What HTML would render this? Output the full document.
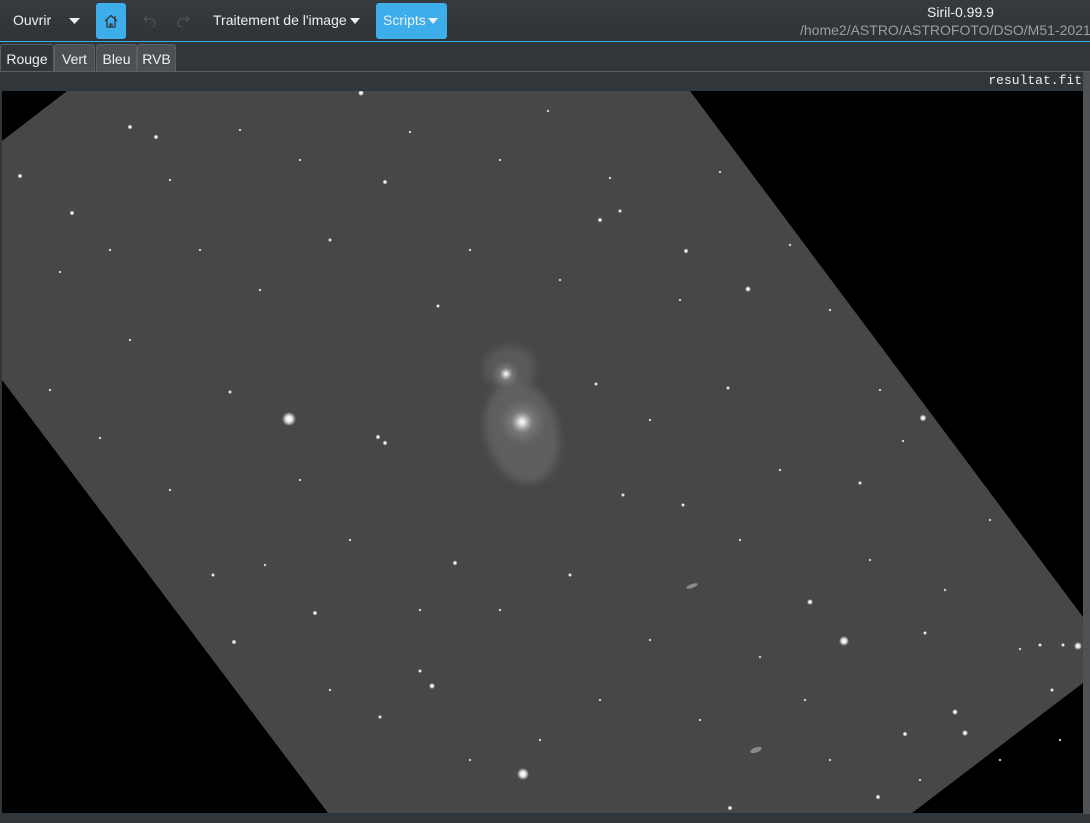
<!DOCTYPE html>
<html><head><meta charset="utf-8"><style>
*{margin:0;padding:0;box-sizing:border-box}
body{width:1090px;height:823px;background:#31363b;font-family:"Liberation Sans",sans-serif;color:#eff0f1;overflow:hidden;position:relative}
.tb{position:absolute;left:0;top:0;width:1090px;height:42px;background:linear-gradient(#363b40,#2f3338);border-bottom:1px solid #3daee9}
.t{position:absolute;font-size:14px;top:12px;color:#eff0f1}
.btn{position:absolute;top:3px;height:36px;background:#3daee9;border-radius:3px}
.tab{position:absolute;top:44px;height:28px;font-size:14px;padding-top:6px;text-align:center;border:1px solid #5a5f64;border-bottom:none;border-radius:3px 3px 0 0;background:#4b5055;color:#eff0f1}
</style></head><body>
<div class="tb">
<div class="t" style="left:13px">Ouvrir</div>
<svg style="position:absolute;left:69px;top:18px" width="11" height="6"><path d="M0 0h11L5.5 6z" fill="#eff0f1"/></svg>
<div class="btn" style="left:96px;width:30px"><svg style="position:absolute;left:7px;top:10px" width="16" height="16" viewBox="0 0 16 16"><path d="M2 8L8 2.5 14 8M4 6.5V14h8V6.5M7 14v-3h2v3M12 3v3" stroke="#31363b" stroke-width="1.3" fill="none"/></svg></div>
<svg style="position:absolute;left:143px;top:13px" width="14" height="14" viewBox="0 0 14 14"><path d="M4 3L1 6l3 3M1 6h7a4 4 0 010 8" stroke="#4d5257" stroke-width="1.3" fill="none"/></svg>
<svg style="position:absolute;left:176px;top:13px" width="14" height="14" viewBox="0 0 14 14"><path d="M10 3l3 3-3 3M13 6H6a4 4 0 000 8" stroke="#4d5257" stroke-width="1.3" fill="none"/></svg>
<div class="t" style="left:213px">Traitement de l'image</div>
<svg style="position:absolute;left:350px;top:18px" width="10" height="6"><path d="M0 0h10L5 6z" fill="#eff0f1"/></svg>
<div class="btn" style="left:376px;width:71px"><span style="position:absolute;left:7px;top:9px;font-size:14px">Scripts</span><svg style="position:absolute;left:52px;top:15px" width="10" height="6"><path d="M0 0h10L5 6z" fill="#eff0f1"/></svg></div>
<div style="position:absolute;left:927px;top:4px;font-size:14px">Siril-0.99.9</div>
<div style="position:absolute;left:800px;top:22px;font-size:14px;color:#9a9ea2;white-space:nowrap">/home2/ASTRO/ASTROFOTO/DSO/M51-2021_0</div>
</div>
<div class="tab" style="left:0;width:54px;background:#31363b;color:#eff0f1">Rouge</div>
<div class="tab" style="left:54px;width:41px">Vert</div>
<div class="tab" style="left:96px;width:41px">Bleu</div>
<div class="tab" style="left:137px;width:39px">RVB</div>
<div style="position:absolute;left:0;top:71px;width:1090px;height:1px;background:#5a5f64"></div>
<div style="position:absolute;right:8px;top:73px;font-family:'Liberation Mono',monospace;font-size:13px;color:#eff0f1">resultat.fit</div>
<div style="position:absolute;left:1083px;top:72px;width:7px;height:742px;background:#4d5257"></div>
<svg style="position:absolute;left:0;top:91px" width="1083" height="722" viewBox="0 91 1083 722">
<defs>
<radialGradient id="s"><stop offset="0" stop-color="#fff"/><stop offset=".4" stop-color="#eee"/><stop offset="1" stop-color="#fff" stop-opacity="0"/></radialGradient>
<radialGradient id="g"><stop offset="0" stop-color="#fff"/><stop offset=".12" stop-color="#ddd"/><stop offset=".45" stop-color="#8a8a8a" stop-opacity=".6"/><stop offset="1" stop-color="#777" stop-opacity="0"/></radialGradient>
<filter id="b"><feGaussianBlur stdDeviation="4"/></filter>
</defs>
<rect x="0" y="91" width="1083" height="722" fill="#000"/>
<rect x="0" y="91" width="2" height="722" fill="#31363b"/>
<polygon points="67,91 690,91 1083,617 1083,683 912,813 328,813 2,380 2,141" fill="#474747"/>
<g fill="url(#s)">
<ellipse cx="522" cy="432" rx="36" ry="52" fill="#707070" opacity=".6" filter="url(#b)" transform="rotate(-15 522 432)"/>
<ellipse cx="510" cy="368" rx="26" ry="22" fill="#666" opacity=".6" filter="url(#b)"/>
<circle cx="522" cy="422" r="24" fill="url(#g)"/>
<circle cx="506" cy="374" r="14" fill="url(#g)"/>
<circle cx="289" cy="419" r="7"/><circle cx="844" cy="641" r="5"/><circle cx="923" cy="418" r="3.5"/><circle cx="1078" cy="646" r="4"/><circle cx="523" cy="774" r="6"/>
<circle cx="361" cy="93" r="3"/><circle cx="130" cy="127" r="2.5"/><circle cx="156" cy="137" r="2.5"/><circle cx="72" cy="213" r="2.5"/><circle cx="20" cy="176" r="2.5"/>
<circle cx="385" cy="182" r="2.5"/><circle cx="748" cy="289" r="3"/><circle cx="686" cy="251" r="2.5"/><circle cx="600" cy="220" r="2.5"/><circle cx="620" cy="211" r="2"/>
<circle cx="330" cy="240" r="2"/><circle cx="438" cy="306" r="2"/><circle cx="230" cy="392" r="2"/><circle cx="378" cy="437" r="2.5"/><circle cx="385" cy="443" r="2.5"/>
<circle cx="455" cy="563" r="2.5"/><circle cx="432" cy="686" r="3"/><circle cx="420" cy="671" r="2"/><circle cx="315" cy="613" r="2.5"/><circle cx="234" cy="642" r="2.5"/>
<circle cx="810" cy="602" r="3"/><circle cx="955" cy="712" r="3"/><circle cx="965" cy="733" r="3"/><circle cx="905" cy="734" r="2.5"/><circle cx="878" cy="797" r="2.5"/>
<circle cx="730" cy="808" r="2.5"/><circle cx="683" cy="505" r="2"/><circle cx="623" cy="495" r="2"/><circle cx="570" cy="575" r="2"/><circle cx="596" cy="384" r="2"/>
<circle cx="728" cy="388" r="2"/><circle cx="860" cy="483" r="2"/><circle cx="903" cy="441" r="1.5"/><circle cx="1040" cy="645" r="2"/><circle cx="1063" cy="645" r="2"/>
<circle cx="1052" cy="690" r="2"/><circle cx="1020" cy="649" r="1.5"/><circle cx="925" cy="633" r="2"/><circle cx="760" cy="657" r="1.5"/><circle cx="805" cy="700" r="1.5"/>
<circle cx="380" cy="717" r="2"/><circle cx="330" cy="690" r="1.5"/><circle cx="213" cy="575" r="2"/><circle cx="265" cy="565" r="1.5"/><circle cx="170" cy="490" r="1.5"/>
<circle cx="100" cy="438" r="1.5"/><circle cx="50" cy="390" r="1.5"/><circle cx="130" cy="340" r="1.5"/><circle cx="60" cy="272" r="1.5"/><circle cx="110" cy="250" r="1.5"/>
<circle cx="200" cy="250" r="1.5"/><circle cx="260" cy="290" r="1.5"/><circle cx="410" cy="132" r="1.5"/><circle cx="500" cy="160" r="1.5"/><circle cx="548" cy="111" r="1.5"/>
<circle cx="610" cy="178" r="1.5"/><circle cx="720" cy="172" r="1.5"/><circle cx="790" cy="245" r="1.5"/><circle cx="830" cy="310" r="1.5"/><circle cx="880" cy="390" r="1.5"/>
<circle cx="990" cy="520" r="1.5"/><circle cx="945" cy="590" r="1.5"/><circle cx="740" cy="540" r="1.5"/><circle cx="650" cy="640" r="1.5"/><circle cx="600" cy="700" r="1.5"/>
<circle cx="540" cy="740" r="1.5"/><circle cx="470" cy="760" r="1.5"/><circle cx="420" cy="610" r="1.5"/><circle cx="500" cy="610" r="1.5"/><circle cx="350" cy="540" r="1.5"/>
<circle cx="300" cy="480" r="1.5"/><circle cx="650" cy="420" r="1.5"/><circle cx="680" cy="300" r="1.5"/><circle cx="560" cy="280" r="1.5"/><circle cx="470" cy="250" r="1.5"/>
<circle cx="170" cy="180" r="1.5"/><circle cx="240" cy="130" r="1.5"/><circle cx="300" cy="160" r="1.5"/><circle cx="920" cy="780" r="1.5"/><circle cx="830" cy="760" r="1.5"/>
<circle cx="700" cy="720" r="1.5"/><circle cx="1000" cy="760" r="1.5"/><circle cx="1060" cy="740" r="1.5"/><circle cx="870" cy="560" r="1.5"/><circle cx="780" cy="470" r="1.5"/>
</g>
<ellipse cx="692" cy="586" rx="6" ry="2" fill="#8a8a8a" transform="rotate(-20 692 586)"/>
<ellipse cx="756" cy="750" rx="6" ry="2.5" fill="#8a8a8a" transform="rotate(-20 756 750)"/>
</svg>
</body></html>
